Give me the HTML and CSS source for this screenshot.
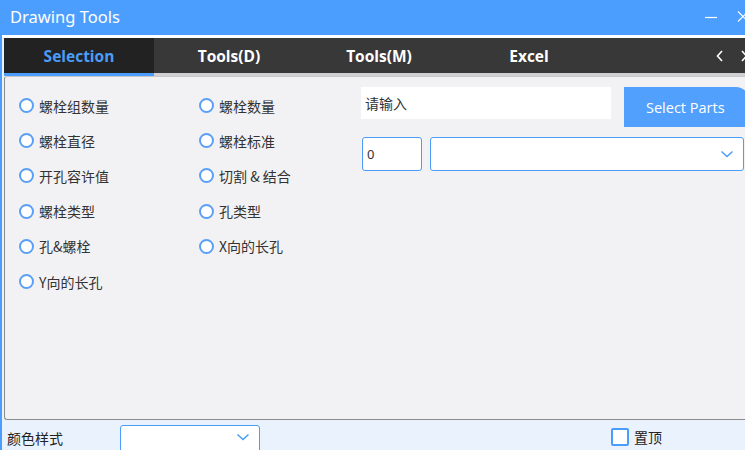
FILE: index.html
```html
<!DOCTYPE html>
<html>
<head>
<meta charset="utf-8">
<link rel="stylesheet" href="styles.css">
</head>
<body>
<div class="window">
  <div class="titlebar">
    <span class="title">Drawing Tools</span>
    <div class="winbtns">
      <svg class="wbtn" width="12" height="14" viewBox="0 0 12 14"><path d="M0 7.5H12" stroke="#fff" stroke-width="1.2"/></svg>
      <svg class="wbtn" width="14" height="14" viewBox="0 0 14 14"><path d="M2 1.5L12 11.5M12 1.5L2 11.5" stroke="#fff" stroke-width="1.1"/></svg>
    </div>
  </div>
  <div class="main">
    <div class="tabbar">
      <div class="tab active">Selection</div>
      <div class="tab">Tools(D)</div>
      <div class="tab">Tools(M)</div>
      <div class="tab">Excel</div>
      <div class="arrows">
        <svg width="10" height="14" viewBox="0 0 10 14"><path d="M7 2L2.5 7L7 12" fill="none" stroke="#fff" stroke-width="1.6"/></svg>
        <svg width="10" height="14" viewBox="0 0 10 14"><path d="M3 2L7.5 7L3 12" fill="none" stroke="#fff" stroke-width="1.6"/></svg>
      </div>
    </div>
    <div class="underline"><div class="ul-active"></div></div>
    <div class="panel">
      <div class="radios">
        <label class="radio"><span class="circle"></span>螺栓组数量</label>
        <label class="radio"><span class="circle"></span>螺栓数量</label>
        <label class="radio"><span class="circle"></span>螺栓直径</label>
        <label class="radio"><span class="circle"></span>螺栓标准</label>
        <label class="radio"><span class="circle"></span>开孔容许值</label>
        <label class="radio"><span class="circle"></span>切割&nbsp;&amp;&nbsp;结合</label>
        <label class="radio"><span class="circle"></span>螺栓类型</label>
        <label class="radio"><span class="circle"></span>孔类型</label>
        <label class="radio"><span class="circle"></span>孔&amp;螺栓</label>
        <label class="radio"><span class="circle"></span>X向的长孔</label>
        <label class="radio"><span class="circle"></span>Y向的长孔</label>
      </div>
      <div class="right">
        <div class="row1">
          <div class="textinput">请输入</div>
          <div class="btn">Select Parts</div>
        </div>
        <div class="row2">
          <div class="numinput">0</div>
          <div class="select wide">
            <svg width="14" height="8" viewBox="0 0 14 8"><path d="M1.5 1.5L7 6.5L12.5 1.5" fill="none" stroke="#4a9df8" stroke-width="1.5"/></svg>
          </div>
        </div>
      </div>
    </div>
    <div class="bottombar">
      <span class="colorlabel">颜色样式</span>
      <div class="select small">
        <svg width="14" height="8" viewBox="0 0 14 8"><path d="M1.5 1.5L7 6.5L12.5 1.5" fill="none" stroke="#4a9df8" stroke-width="1.5"/></svg>
      </div>
      <div class="spacer"></div>
      <label class="check"><span class="box"></span>置顶</label>
    </div>
  </div>
</div>
</body>
</html>
```

FILE: styles.css
```css
html, body {
  margin: 0;
  padding: 0;
  width: 745px;
  height: 450px;
  overflow: hidden;
  background: #eaf2fe;
  font-family: "Noto Sans", "Noto Sans CJK SC", sans-serif;
}

.window {
  width: 745px;
  height: 450px;
  box-sizing: border-box;
  border-left: 2px solid #4c9efe;
  display: flex;
  flex-direction: column;
  overflow: hidden;
}

.titlebar {
  height: 35px;
  flex: none;
  background: #4c9efe;
  display: flex;
  align-items: center;
  padding-left: 8px;
}

.title {
  color: #fff;
  font-size: 16.5px;
  line-height: 1;
  margin-top: -1px;
}

.winbtns {
  margin-left: auto;
  display: flex;
  gap: 19px;
  margin-right: -5px;
  margin-top: -2px;
}

.main {
  flex: 1;
  display: flex;
  flex-direction: column;
  border-top: 3px solid #fff;
  padding-left: 2px;
  background: #eaf2fe;
  min-height: 0;
}

.tabbar {
  height: 35px;
  flex: none;
  background: #383838;
  display: flex;
  align-items: center;
}

.tab {
  width: 150px;
  height: 100%;
  display: flex;
  align-items: center;
  justify-content: center;
  color: #fff;
  font-weight: bold;
  font-size: 15.5px;
  font-family: "Open Sans", "Noto Sans", sans-serif;
}

.tab.active {
  background: #222222;
  color: #4a9df8;
}

.arrows {
  margin-left: auto;
  display: flex;
  gap: 14px;
  margin-right: -4px;
}

.underline {
  height: 3px;
  flex: none;
  background: #d0d0d2;
}

.ul-active {
  width: 150px;
  height: 3px;
  background: #4c9efe;
}

.panel {
  height: 344px;
  flex: none;
  box-sizing: border-box;
  border: 1px solid #8c8c8c;
  border-right: none;
  border-top: 1px solid #c8c8cc;
  border-radius: 3px 0 0 3px;
  background: #f2f2f4;
  display: flex;
}

.radios {
  width: 356px;
  flex: none;
  box-sizing: border-box;
  padding: 11px 0 0 14px;
  display: grid;
  grid-template-columns: 180px 160px;
  grid-auto-rows: 35.2px;
  align-content: start;
}

.radio {
  display: flex;
  align-items: center;
  gap: 5px;
  font-size: 14px;
  color: #333;
  font-family: "Noto Sans CJK SC", "Noto Sans", sans-serif;
}

.circle {
  width: 11px;
  height: 11px;
  border: 2px solid #5a9ff8;
  border-radius: 50%;
  background: #fff;
  flex: none;
}

.right {
  flex: 1;
  padding-top: 10px;
  display: flex;
  flex-direction: column;
  gap: 10px;
}

.row1 {
  display: flex;
  align-items: flex-start;
  gap: 13px;
}

.textinput {
  width: 250px;
  height: 32px;
  background: #fff;
  box-sizing: border-box;
  padding-left: 4px;
  display: flex;
  align-items: center;
  font-size: 14px;
  color: #333;
  font-family: "Noto Sans CJK SC", sans-serif;
}

.btn {
  width: 125px;
  height: 40px;
  flex: none;
  background: #52a0fd;
  border-top-right-radius: 13px;
  color: #fff;
  font-size: 14.5px;
  display: flex;
  align-items: center;
  padding-left: 22px;
  box-sizing: border-box;
  font-family: "Open Sans", "Noto Sans", sans-serif;
}

.row2 {
  display: flex;
  gap: 8px;
  padding-left: 1px;
}

.numinput {
  width: 60px;
  height: 34px;
  box-sizing: border-box;
  border: 1px solid #4a9df8;
  border-radius: 3px;
  background: #fff;
  font-size: 13px;
  color: #333;
  display: flex;
  align-items: center;
  padding-left: 4px;
}

.select {
  box-sizing: border-box;
  border: 1px solid #4a9df8;
  border-radius: 3px;
  background: #fff;
  display: flex;
  align-items: center;
  justify-content: flex-end;
}

.select.wide {
  width: 314px;
  height: 34px;
  padding-right: 9px;
}

.bottombar {
  flex: 1;
  display: flex;
  align-items: flex-start;
  background: #eaf2fe;
}

.colorlabel {
  font-size: 14px;
  color: #222;
  margin-left: 3px;
  margin-top: 8px;
  width: 113px;
  font-family: "Noto Sans CJK SC", sans-serif;
  line-height: 20px;
}

.select.small {
  width: 140px;
  height: 30px;
  margin-top: 5px;
  padding-right: 9px;
  padding-bottom: 6px;
}

.spacer {
  flex: 1;
}

.check {
  display: flex;
  align-items: center;
  gap: 5px;
  margin-top: 7px;
  margin-right: 83px;
  font-size: 14px;
  color: #222;
  font-family: "Noto Sans CJK SC", sans-serif;
  line-height: 20px;
}

.box {
  width: 14px;
  height: 14px;
  border: 2px solid #4a9df8;
  border-radius: 2px;
  background: #fff;
}
```
